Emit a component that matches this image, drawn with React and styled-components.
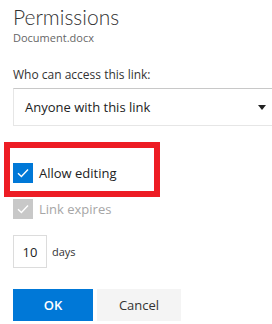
import React from 'react'
import styled, { createGlobalStyle } from 'styled-components'

const GlobalStyle = createGlobalStyle`
  html, body {
    margin: 0;
    padding: 0;
    background: #fff;
    overflow: hidden;
  }
  body {
    font-family: "Open Sans", "Noto Sans", sans-serif;
    color: #333;
  }
`

export default function App() {
  return (
    <>
      <GlobalStyle />
      <Panel>
        <Title>Permissions</Title>
        <FileName>Document.docx</FileName>
        <Label>Who can access this link:</Label>
        <Select>
          <span>Anyone with this link</span>
          <Arrow viewBox="0 0 8 5">
            <path d="M0 0h8L4 5z" fill="#222" />
          </Arrow>
        </Select>
        <Highlight>
          <CheckRow>
            <Check checked />
            <CheckLabel>Allow editing</CheckLabel>
          </CheckRow>
        </Highlight>
        <CheckRow disabled>
          <Check disabled />
          <CheckLabel disabled>Link expires</CheckLabel>
        </CheckRow>
        <DaysRow>
          <DaysInput>10</DaysInput>
          <DaysLabel>days</DaysLabel>
        </DaysRow>
        <Buttons>
          <Button primary>OK</Button>
          <Button>Cancel</Button>
        </Buttons>
      </Panel>
    </>
  )
}

function Check({ checked, disabled }) {
  return (
    <Box checked={checked} disabled={disabled}>
      <svg width="12" height="10" viewBox="0 0 12 10">
        <path d="M1 5.2l3.4 3.3L11 1.5" fill="none" stroke="#fff" strokeWidth="1.4" />
      </svg>
    </Box>
  )
}

const Panel = styled.div`
  width: 272px;
  height: 324px;
  padding: 4px 0 0 13px;
  box-sizing: border-box;
  overflow: hidden;
`
const Title = styled.h1`
  margin: 0;
  font-family: Lato, "Open Sans", sans-serif;
  font-size: 21px;
  font-weight: 300;
  line-height: 26px;
  color: #333;
`
const FileName = styled.div`
  font-size: 11px;
  line-height: 14px;
  color: #666;
  margin-top: 1px;
`
const Label = styled.div`
  font-size: 12px;
  line-height: 16px;
  margin-top: 22px;
`
const Select = styled.div`
  margin-top: 5px;
  height: 38px;
  margin-right: -20px;
  box-sizing: border-box;
  border: 1px solid #e6e6e6;
  border-top-color: #c8c8c8;
  display: flex;
  align-items: center;
  justify-content: space-between;
  padding: 0 25px 0 11px;
  font-size: 13px;
  color: #222;
`
const Arrow = styled.svg`
  width: 8px;
  height: 5px;
`
const Highlight = styled.div`
  margin: 16px 0 0 -9px;
  width: 156px;
  height: 55px;
  box-sizing: border-box;
  border: 6px solid #ed1c24;
  padding: 15px 0 0 3px;
`
const CheckRow = styled.div`
  display: flex;
  align-items: center;
  gap: 6px;
  height: 20px;
  margin-top: ${p => (p.disabled ? '2px' : '0')};
`
const Box = styled.span`
  width: 20px;
  height: 20px;
  box-sizing: border-box;
  background: ${p => (p.disabled ? '#c8c8c8' : '#0078d7')};
  display: flex;
  align-items: center;
  justify-content: center;
`
const CheckLabel = styled.span`
  font-size: 13px;
  color: ${p => (p.disabled ? '#a6a6a6' : '#222')};
`
const DaysRow = styled.div`
  display: flex;
  align-items: center;
  gap: 5px;
  margin-top: 16px;
`
const DaysInput = styled.div`
  width: 34px;
  height: 33px;
  box-sizing: border-box;
  border: 1px solid #dcdcdc;
  display: flex;
  align-items: center;
  justify-content: center;
  font-size: 13px;
  color: #222;
`
const DaysLabel = styled.span`
  font-size: 11px;
`
const Buttons = styled.div`
  display: flex;
  gap: 4px;
  margin-top: 21px;
`
const Button = styled.button`
  height: 32px;
  width: ${p => (p.primary ? '80px' : '84px')};
  border: none;
  padding: 0;
  font-family: inherit;
  font-size: 13px;
  font-weight: ${p => (p.primary ? 600 : 400)};
  background: ${p => (p.primary ? '#0078d7' : '#f4f4f4')};
  color: ${p => (p.primary ? '#fff' : '#333')};
`
